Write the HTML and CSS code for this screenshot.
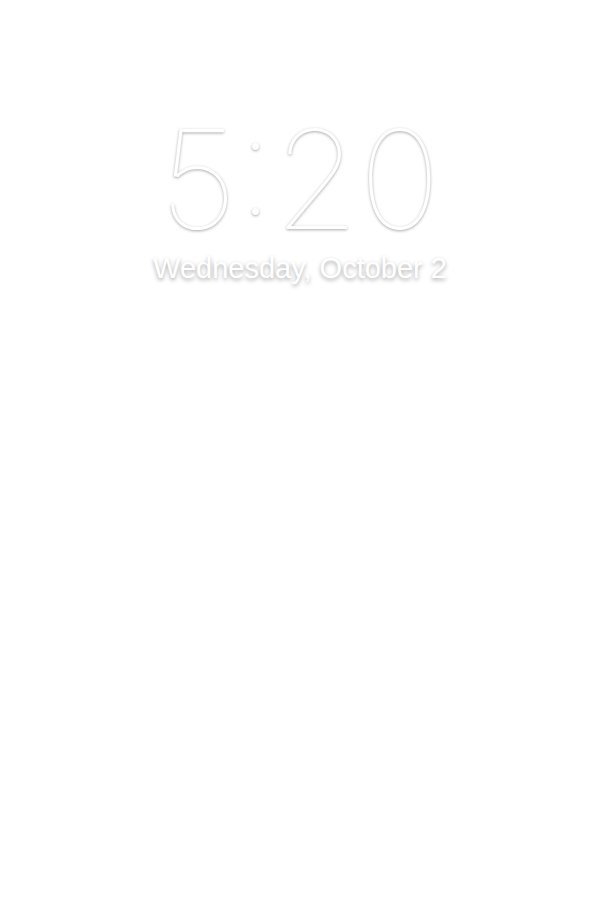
FILE: index.html
```html
<!DOCTYPE html>
<html>
<head>
<meta charset="utf-8">
<link rel="stylesheet" href="styles.css">
</head>
<body>
<main class="lock">
  <div class="time">5:20</div>
  <div class="date">Wednesday, October 2</div>
</main>
</body>
</html>
```
FILE: styles.css
```css
html, body {
  margin: 0;
  padding: 0;
  background: #ffffff;
  width: 600px;
  height: 900px;
  overflow: hidden;
}
.lock {
  display: flex;
  flex-direction: column;
  align-items: center;
  padding-top: 111px;
}
.time {
  font-family: "Inter", "Liberation Sans", sans-serif;
  font-weight: 100;
  font-size: 137px;
  line-height: 136px;
  color: #ffffff;
  text-shadow: 0 1px 3px rgba(0, 0, 0, 0.35);
}
.date {
  font-family: "Liberation Sans", sans-serif;
  font-size: 29px;
  line-height: 34px;
  color: #ffffff;
  margin-top: 4px;
  text-shadow: 0 2px 4px rgba(0, 0, 0, 0.35);
}
```
